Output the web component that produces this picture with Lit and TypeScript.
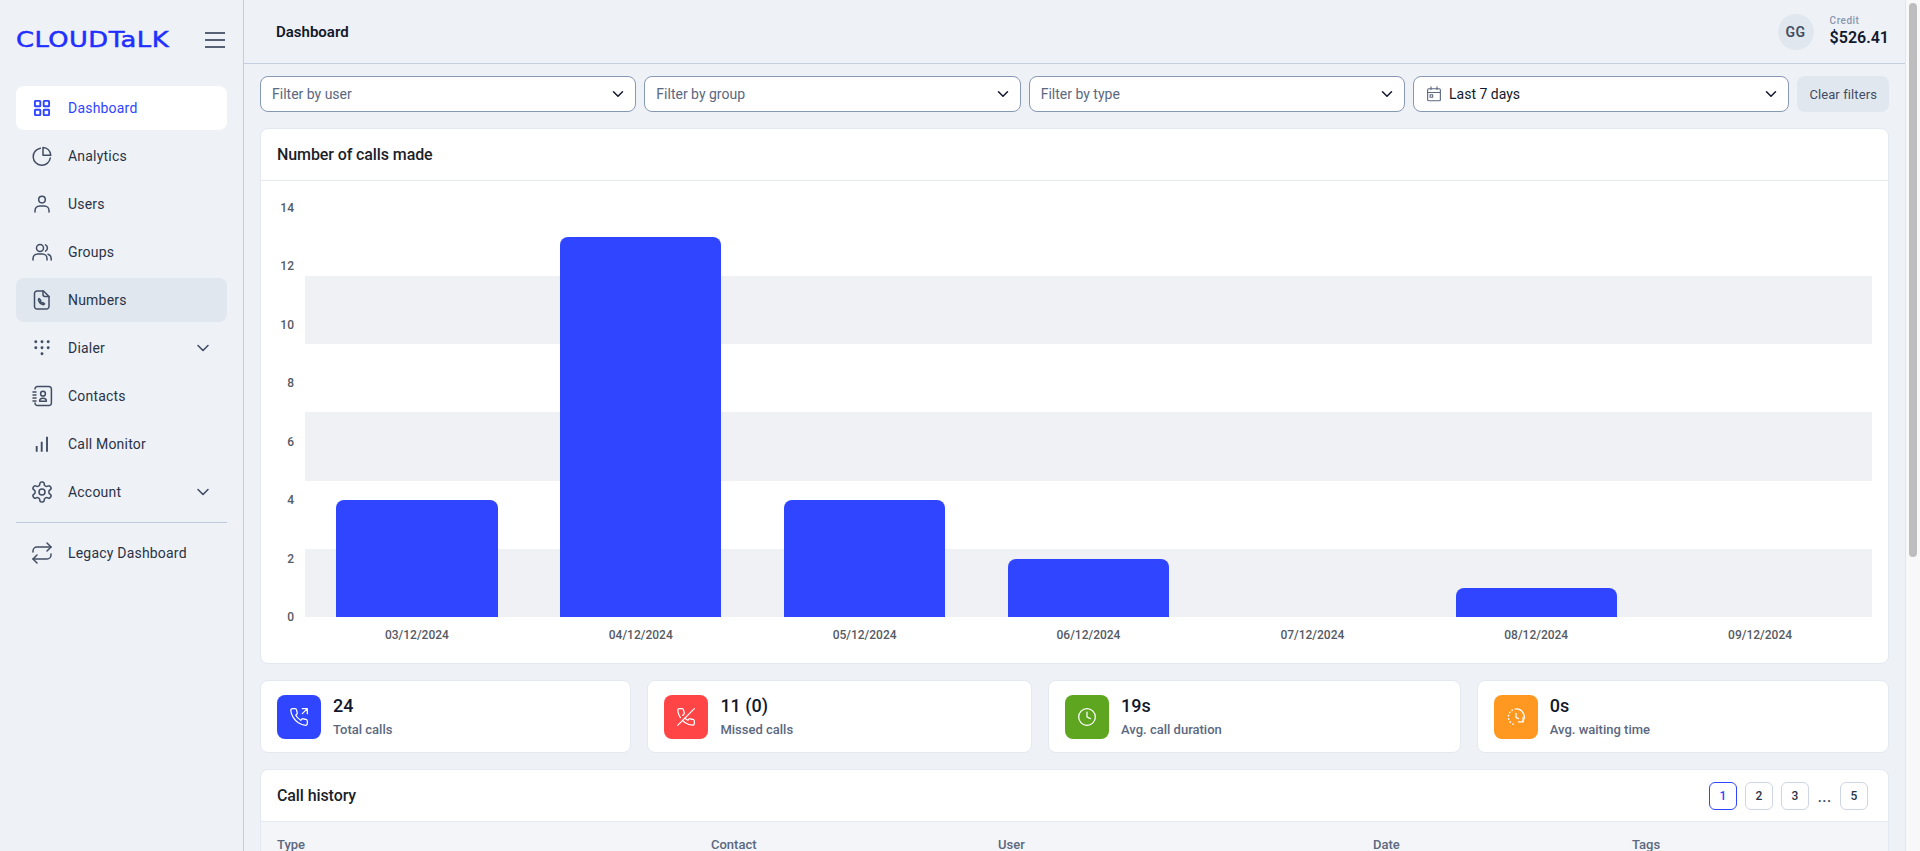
import { LitElement, html, css, svg } from "lit";
import { customElement } from "lit/decorators.js";

const ico = (body: unknown, cls = "") =>
  html`<svg class="ico ${cls}" viewBox="0 0 24 24" fill="none" stroke="currentColor" stroke-width="1.5" stroke-linecap="round" stroke-linejoin="round">${body}</svg>`;

const icons: Record<string, unknown> = {
  dashboard: svg`<g stroke-width="1.9" stroke-linejoin="miter"><rect x="4.9" y="4.9" width="5.4" height="5.4" rx=".6"/><rect x="13.7" y="4.9" width="5.4" height="5.4" rx=".6"/><rect x="4.9" y="13.7" width="5.4" height="5.4" rx=".6"/><rect x="13.7" y="13.7" width="5.4" height="5.4" rx=".6"/></g>`,
  analytics: svg`<path d="M10.4 4.2A8.6 8.6 0 1 0 20.3 14"/><path d="M13 3.4c4.2.2 7.4 3.4 7.8 7.8H13z"/>`,
  users: svg`<circle cx="12" cy="7.6" r="3.3"/><path d="M5 20v-1.5A4.5 4.5 0 0 1 9.5 14h5a4.5 4.5 0 0 1 4.5 4.5V20"/>`,
  groups: svg`<circle cx="10" cy="8" r="3.5"/><path d="M3 20v-1.5A4.5 4.5 0 0 1 7.5 14h5a4.5 4.5 0 0 1 4.5 4.5V20"/><path d="M15.5 4.8a3.6 3.6 0 0 1 0 6.4"/><path d="M18 14.2a4.6 4.6 0 0 1 3.2 4.3V20"/>`,
  numbers: svg`<path d="M7 3h6.5l5.5 5.5v10a2.5 2.5 0 0 1-2.5 2.5H7a2.5 2.5 0 0 1-2.5-2.5v-13A2.5 2.5 0 0 1 7 3z"/><path d="M13 3v3.5a2 2 0 0 0 2 2h4"/><path d="M9 10.5c-.7.5-.7 1.4-.3 2.4.7 1.6 1.9 2.8 3.5 3.5 1 .4 1.9.3 2.4-.5l-1.7-1.3-.9.6c-.8-.4-1.3-1-1.7-1.7l.6-.9z"/>`,
  dialer: svg`<g fill="currentColor" stroke="none"><circle cx="5.8" cy="5.7" r="1.45"/><circle cx="12" cy="5.7" r="1.45"/><circle cx="18.2" cy="5.7" r="1.45"/><circle cx="5.8" cy="11.7" r="1.45"/><circle cx="12" cy="11.7" r="1.45"/><circle cx="18.2" cy="11.7" r="1.45"/><circle cx="12" cy="17.7" r="1.45"/></g>`,
  contacts: svg`<path d="M5 5a2.5 2.5 0 0 1 2.5-2.6h11.4a2.5 2.5 0 0 1 2.5 2.6v14a2.5 2.5 0 0 1-2.5 2.6H7.5A2.5 2.5 0 0 1 5 19"/><path d="M3 8h3M3 11h3M3 14h3M3 17h3"/><circle cx="13" cy="9.7" r="2.4"/><path d="M9.6 17.2c0-1.9 1.5-3 3.4-3s3.4 1.1 3.4 3z"/>`,
  monitor: svg`<path stroke-width="1.9" stroke-linecap="butt" d="M6.7 14v5.8M11.7 9.7v10.1M17 4.7v15.1"/>`,
  account: svg`<path d="M12.22 2h-.44a2 2 0 0 0-2 2v.18a2 2 0 0 1-1 1.73l-.43.25a2 2 0 0 1-2 0l-.15-.08a2 2 0 0 0-2.73.73l-.22.38a2 2 0 0 0 .73 2.73l.15.1a2 2 0 0 1 1 1.72v.51a2 2 0 0 1-1 1.74l-.15.09a2 2 0 0 0-.73 2.73l.22.38a2 2 0 0 0 2.73.73l.15-.08a2 2 0 0 1 2 0l.43.25a2 2 0 0 1 1 1.73V20a2 2 0 0 0 2 2h.44a2 2 0 0 0 2-2v-.18a2 2 0 0 1 1-1.73l.43-.25a2 2 0 0 1 2 0l.15.08a2 2 0 0 0 2.73-.73l.22-.39a2 2 0 0 0-.73-2.73l-.15-.08a2 2 0 0 1-1-1.74v-.5a2 2 0 0 1 1-1.74l.15-.09a2 2 0 0 0 .73-2.73l-.22-.38a2 2 0 0 0-2.73-.73l-.15.08a2 2 0 0 1-2 0l-.43-.25a2 2 0 0 1-1-1.73V4a2 2 0 0 0-2-2z"/><circle cx="12" cy="12" r="3"/>`,
  legacy: svg`<path d="m17 2 4 4-4 4"/><path d="M3 11v-1a4 4 0 0 1 4-4h14"/><path d="m7 22-4-4 4-4"/><path d="M21 13v1a4 4 0 0 1-4 4H3"/>`,
  chevron: svg`<path d="m6 9 6 6 6-6"/>`,
  calendar: svg`<rect x="3.5" y="5" width="17" height="16" rx="1.5"/><path d="M3.5 10h17M8 2.5V6M16 2.5V6"/><rect x="6.8" y="13" width="3.4" height="3.4"/>`,
  out: svg`<path d="M16 2h6v6M16 8l6-6"/><path d="M22 16.92v3a2 2 0 0 1-2.18 2 19.79 19.79 0 0 1-8.63-3.07 19.5 19.5 0 0 1-6-6 19.79 19.79 0 0 1-3.07-8.67A2 2 0 0 1 4.11 2h3a2 2 0 0 1 2 1.72 12.84 12.84 0 0 0 .7 2.81 2 2 0 0 1-.45 2.11L8.09 9.91a16 16 0 0 0 6 6l1.27-1.27a2 2 0 0 1 2.11-.45 12.84 12.84 0 0 0 2.81.7A2 2 0 0 1 22 16.92z"/>`,
  missed: svg`<path d="M10.68 13.31a16 16 0 0 0 3.41 2.6l1.27-1.27a2 2 0 0 1 2.11-.45 12.84 12.84 0 0 0 2.81.7 2 2 0 0 1 1.72 2v3a2 2 0 0 1-2.18 2 19.79 19.79 0 0 1-8.63-3.07 19.42 19.42 0 0 1-3.33-2.67m-2.67-3.34a19.79 19.79 0 0 1-3.07-8.63A2 2 0 0 1 4.11 2h3a2 2 0 0 1 2 1.72 12.84 12.84 0 0 0 .7 2.81 2 2 0 0 1-.45 2.11L8.09 9.91"/><path d="M22 2 2 22"/>`,
  clock: svg`<circle cx="12" cy="12" r="10"/><path d="M12 6v6l4 2"/>`,
  waiting: svg`<path d="M11 2.5A9.5 9.5 0 0 1 20 17.5"/><path d="M20.5 12.5v5.4h-5.4"/><path d="M12 7.5v5l3 1.5"/><path stroke-width="1.8" stroke-dasharray=".4 3.6" d="M7.5 3.8A9.5 9.5 0 0 0 9.5 21"/>`,
};

const nav = [
  { label: "Dashboard", icon: "dashboard", cls: "active" },
  { label: "Analytics", icon: "analytics" },
  { label: "Users", icon: "users" },
  { label: "Groups", icon: "groups" },
  { label: "Numbers", icon: "numbers", cls: "hover" },
  { label: "Dialer", icon: "dialer", more: true },
  { label: "Contacts", icon: "contacts" },
  { label: "Call Monitor", icon: "monitor" },
  { label: "Account", icon: "account", more: true },
];

const bars = [
  ["03/12/2024", 4],
  ["04/12/2024", 13],
  ["05/12/2024", 4],
  ["06/12/2024", 2],
  ["07/12/2024", 0],
  ["08/12/2024", 1],
  ["09/12/2024", 0],
] as [string, number][];

const stats = [
  { value: "24", label: "Total calls", icon: "out", cls: "blue" },
  { value: "11 (0)", label: "Missed calls", icon: "missed", cls: "red" },
  { value: "19s", label: "Avg. call duration", icon: "clock", cls: "green" },
  { value: "0s", label: "Avg. waiting time", icon: "waiting", cls: "orange" },
];

@customElement("app-root")
export class AppRoot extends LitElement {
  static styles = css`
    :host {
      display: flex;
      height: 100vh;
      background: #eef1f6;
      color: #12182b;
      font-family: Roboto, "Liberation Sans", sans-serif;
      font-size: 14px;
      overflow: hidden;
    }
    * { box-sizing: border-box; }
    .ico { width: 24px; height: 24px; flex: none; display: block; }

    .side {
      width: 244px;
      flex: none;
      border-right: 1px solid #c3cddb;
      padding: 0 16px;
      display: flex;
      flex-direction: column;
    }
    .brand {
      height: 80px;
      margin-bottom: 6px;
      display: flex;
      align-items: center;
      justify-content: space-between;
    }
    .logo {
      color: #1f2fff;
      font-family: "DejaVu Sans", sans-serif;
      font-size: 22px;
      line-height: 1;
      letter-spacing: 0.4px;
      -webkit-text-stroke: 0.5px #1f2fff;
      white-space: nowrap;
      transform: scaleX(1.17);
      transform-origin: left center;
    }
    .logo span { text-transform: lowercase; }
    .burger { width: 20px; height: 16px; display: block; color: #566176; margin-right: 2px; }
    .item {
      height: 44px;
      margin-bottom: 4px;
      border-radius: 8px;
      display: flex;
      align-items: center;
      gap: 14px;
      padding: 0 14px;
      color: #2a3347;
      letter-spacing: 0.2px;
    }
    .item .ico { color: #414d63; }
    .item .more { width: 20px; height: 20px; margin-left: auto; stroke-width: 1.9; }
    .item.active { background: #fff; color: #3045ff; }
    .item.active .ico { color: #3045ff; }
    .item.hover { background: #e1e7ef; }
    .rule { border-top: 1px solid #bccadb; margin: 4px 0 8px; }

    .main {
      flex: 1;
      min-width: 0;
      height: 100vh;
      overflow: hidden;
    }
    .scrollbar {
      width: 15px;
      flex: none;
      height: 100vh;
      background: #f8f8f8;
      border-left: 1px solid #e4e6ea;
      padding: 3px 3px 0 3px;
    }
    .scrollbar i { display: block; height: 554px; border-radius: 5px; background: #bdbdbd; }
    .top {
      height: 64px;
      border-bottom: 1px solid #c3cfde;
      display: flex;
      align-items: center;
      padding: 0 16px 0 32px;
    }
    .top h1 { margin: 0; font-size: 15px; font-weight: 600; color: #12182b; }
    .avatar {
      margin-left: auto;
      width: 36px;
      height: 36px;
      border-radius: 50%;
      background: #e1e7ef;
      color: #414d63;
      font-size: 14px;
      font-weight: 600;
      letter-spacing: 0.5px;
      display: flex;
      align-items: center;
      justify-content: center;
    }
    .credit { margin-left: 16px; display: flex; flex-direction: column; }
    .credit small { font-size: 10px; line-height: 12px; letter-spacing: .5px; font-weight: 500; color: #8a97b0; }
    .credit b { font-size: 16px; line-height: 22px; font-weight: 600; color: #12182b; }

    .content { padding: 12px 16px 16px; display: flex; flex-direction: column; gap: 16px; }
    .filters { display: flex; gap: 8px; }
    .select {
      flex: 1 1 0;
      height: 36px;
      background: #fff;
      border: 1px solid #8798b5;
      border-radius: 8px;
      display: flex;
      align-items: center;
      padding: 0 8px 0 11px;
      color: #5b6880;
    }
    .select .chev { width: 18px; height: 18px; margin-left: auto; color: #12182b; stroke-width: 2; }
    .select.date { color: #12182b; }
    .select .cal { width: 18px; height: 18px; color: #5b6880; margin: 0 6px 0 0; }
    .clear {
      flex: none;
      border: 0;
      font: inherit;
      font-size: 13px;
      font-weight: 400;
      letter-spacing: 0.1px;
      color: #414d63;
      background: #e1e7ef;
      border-radius: 8px;
      padding: 0 12px;
      height: 36px;
    }
    .card {
      background: #fff;
      border: 1px solid #e4e9f1;
      border-radius: 8px;
      overflow: hidden;
    }
    .card-head {
      height: 52px;
      padding: 0 20px 0 16px;
      border-bottom: 1px solid #e4e9f1;
      display: flex;
      align-items: center;
      justify-content: space-between;
    }
    .card-head h2 { margin: 0; font-size: 16px; font-weight: 500; letter-spacing: -0.1px; color: #1b1f2a; }

    .chart {
      display: grid;
      grid-template-columns: 44px 1fr;
      padding: 27px 16px 20px 0;
    }
    .yaxis {
      height: 409px;
      display: flex;
      flex-direction: column;
      justify-content: space-between;
      align-items: flex-end;
      padding-right: 11px;
    }
    .yaxis span, .xaxis span { font-size: 12px; font-weight: 500; color: #555a63; }
    .yaxis span { height: 0; display: flex; align-items: center; }
    .plot { height: 409px; position: relative; }
    .stripes { position: absolute; inset: 0; display: grid; grid-template-rows: repeat(6, 1fr); }
    .stripes i:nth-child(even) { background: #f0f1f5; }
    .bars { position: relative; height: 100%; display: grid; grid-template-columns: repeat(7, 1fr); align-items: end; }
    .bar { width: 72%; justify-self: center; background: #3045ff; border-radius: 8px 8px 0 0; }
    .xaxis { grid-column: 2; display: grid; grid-template-columns: repeat(7, 1fr); justify-items: center; padding-top: 10px; line-height: 16px; }

    .stats { display: flex; gap: 16px; }
    .stat {
      flex: 1 1 auto;
      height: 73px;
      padding: 13px 16px;
      display: flex;
      align-items: center;
      gap: 12px;
    }
    .badge { width: 44px; height: 44px; border-radius: 8px; color: #fff; display: flex; align-items: center; justify-content: center; flex: none; }
    .badge .ico { width: 20px; height: 20px; }
    .blue { background: #3045ff; }
    .red { background: #ff4545; }
    .green { background: #5fa620; }
    .orange { background: #ff9821; }
    .stat b { display: block; font-size: 18px; line-height: 24px; font-weight: 500; color: #12182b; }
    .stat small { display: block; font-size: 13px; line-height: 20px; font-weight: 500; color: #5b6880; margin-top: 2px; }

    .pager { display: flex; align-items: center; gap: 8px; }
    .pager span {
      width: 28px;
      height: 28px;
      border: 1px solid #cdd6e4;
      border-radius: 6px;
      display: flex;
      align-items: center;
      justify-content: center;
      font-size: 12px;
      font-weight: 500;
      color: #2a3347;
    }
    .pager span.on { border-color: #3045ff; color: #3045ff; }
    .pager em { font-style: normal; width: 15px; text-align: center; font-size: 18px; color: #414d63; }
    .thead {
      display: grid;
      grid-template-columns: 434px 287px 375px 259px 1fr;
      height: 46px;
      padding: 0 16px;
      align-items: center;
      background: #f3f5f8;
      font-size: 13px;
      font-weight: 500;
      color: #5b6880;
      border-bottom: 1px solid #e4e9f1;
    }
  `;

  render() {
    return html`
      <aside class="side">
        <div class="brand">
          <div class="logo">CLOUDT<span>A</span>LK</div>
          <svg class="burger" viewBox="0 0 20 16" fill="none" stroke="currentColor" stroke-width="2"><path d="M0 1h20M0 8h20M0 15h20"/></svg>
        </div>
        ${nav.map(
          (n) => html`<div class="item ${n.cls ?? ""}">
            ${ico(icons[n.icon])}<span>${n.label}</span>
            ${n.more ? ico(icons.chevron, "more") : ""}
          </div>`
        )}
        <div class="rule"></div>
        <div class="item">${ico(icons.legacy)}<span>Legacy Dashboard</span></div>
      </aside>
      <div class="main">
        <header class="top">
          <h1>Dashboard</h1>
          <div class="avatar">GG</div>
          <div class="credit"><small>Credit</small><b>$526.41</b></div>
        </header>
        <div class="content">
          <div class="filters">
            ${["Filter by user", "Filter by group", "Filter by type"].map(
              (f) => html`<div class="select"><span>${f}</span>${ico(icons.chevron, "chev")}</div>`
            )}
            <div class="select date">${ico(icons.calendar, "cal")}<span>Last 7 days</span>${ico(icons.chevron, "chev")}</div>
            <button class="clear">Clear filters</button>
          </div>
          <section class="card">
            <div class="card-head"><h2>Number of calls made</h2></div>
            <div class="chart">
              <div class="yaxis">${[14, 12, 10, 8, 6, 4, 2, 0].map((t) => html`<span>${t}</span>`)}</div>
              <div class="plot">
                <div class="stripes">${[0, 1, 2, 3, 4, 5].map(() => html`<i></i>`)}</div>
                <div class="bars">
                  ${bars.map(([, v]) => html`<div class="bar" style="height:${(v / 14) * 100}%"></div>`)}
                </div>
              </div>
              <div class="xaxis">${bars.map(([d]) => html`<span>${d}</span>`)}</div>
            </div>
          </section>
          <div class="stats">
            ${stats.map(
              (s) => html`<div class="card stat">
                <div class="badge ${s.cls}">${ico(icons[s.icon])}</div>
                <div><b>${s.value}</b><small>${s.label}</small></div>
              </div>`
            )}
          </div>
          <section class="card">
            <div class="card-head">
              <h2>Call history</h2>
              <div class="pager"><span class="on">1</span><span>2</span><span>3</span><em>...</em><span>5</span></div>
            </div>
            <div class="thead"><div>Type</div><div>Contact</div><div>User</div><div>Date</div><div>Tags</div></div>
          </section>
        </div>
      </div>
      <div class="scrollbar"><i></i></div>
    `;
  }
}
